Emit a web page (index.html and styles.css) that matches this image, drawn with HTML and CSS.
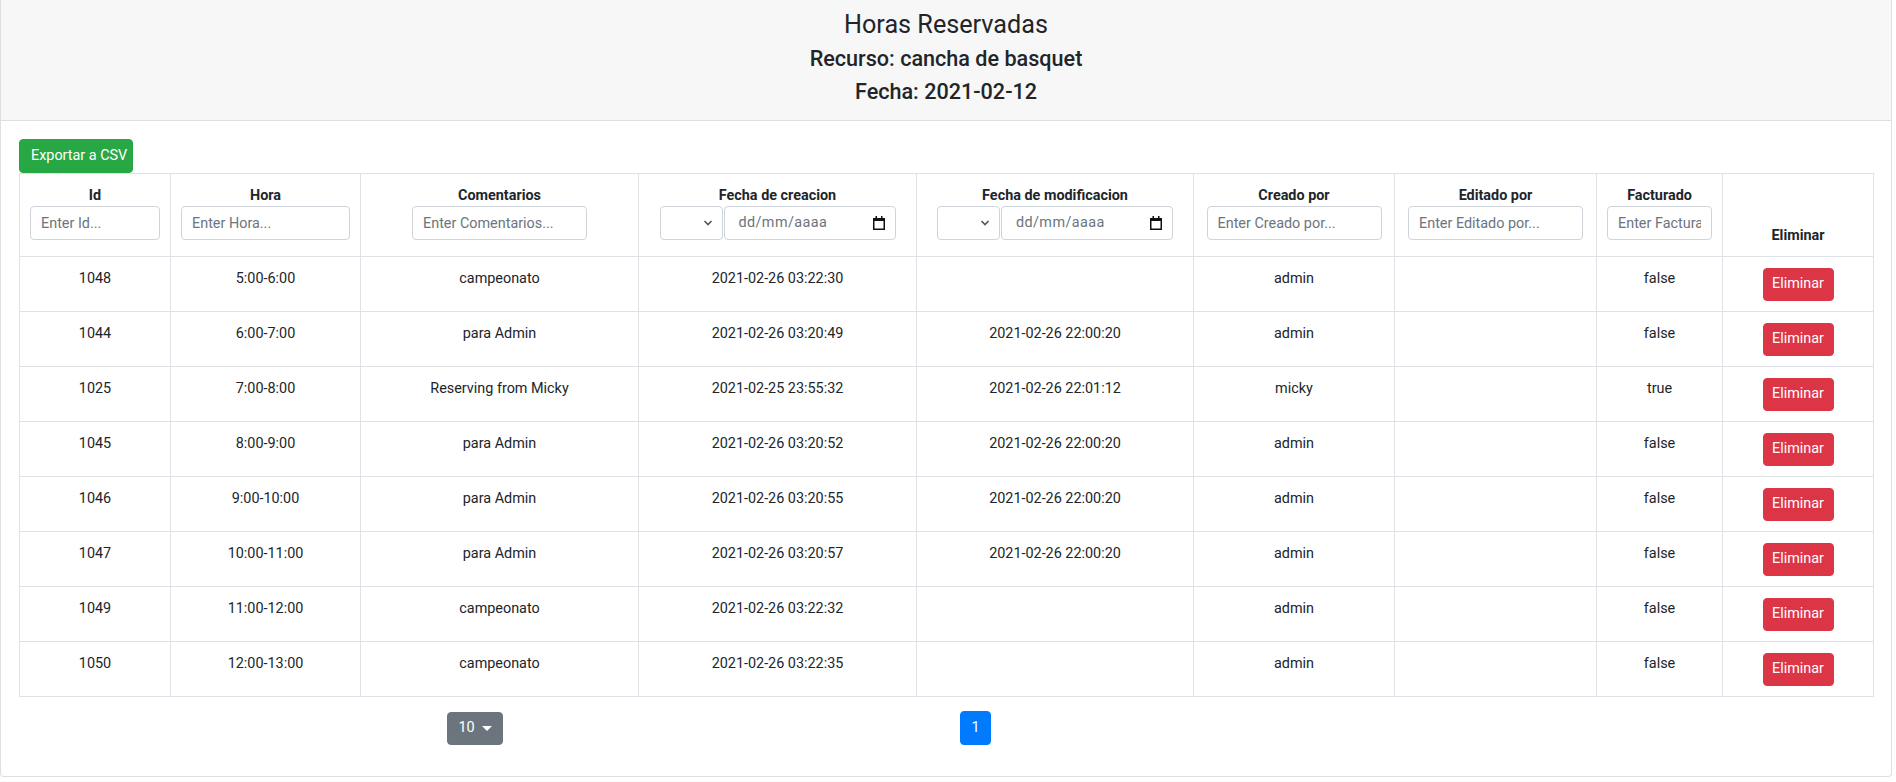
FILE: index.html
```html
<!DOCTYPE html>
<html lang="es">
<head>
<meta charset="utf-8">
<title>Horas Reservadas</title>
<link rel="stylesheet" href="styles.css">
</head>
<body>
<div class="card">
  <div class="card-header">
    <div class="title">Horas Reservadas</div>
    <div class="subtitle">Recurso: cancha de basquet</div>
    <div class="subtitle">Fecha: 2021-02-12</div>
  </div>
  <div class="card-body">
    <button class="btn btn-success">Exportar a CSV</button>
    <table class="grid">
      <colgroup>
        <col style="width:151px"><col style="width:190px"><col style="width:278px"><col style="width:278px"><col style="width:277px"><col style="width:201px"><col style="width:202px"><col style="width:126px"><col style="width:151px">
      </colgroup>
      <thead>
        <tr>
          <th><div class="label">Id</div><input class="filter" placeholder="Enter Id..."></th>
          <th><div class="label">Hora</div><input class="filter" placeholder="Enter Hora..."></th>
          <th><div class="label">Comentarios</div><input class="filter" placeholder="Enter Comentarios..."></th>
          <th><div class="label">Fecha de creacion</div>
            <div class="date-filter">
              <div class="cmp"><svg width="10" height="8" viewBox="0 0 10 8"><path d="M1.5 2 L5 5.5 L8.5 2" fill="none" stroke="#555" stroke-width="1.6"/></svg></div>
              <div class="date"><span>dd/mm/aaaa</span><svg width="12" height="14" viewBox="0 0 12 14"><rect x="0.75" y="2.75" width="10.5" height="10.5" fill="none" stroke="#111" stroke-width="1.5"/><rect x="0" y="2" width="12" height="3" fill="#111"/><rect x="2.5" y="0" width="1.5" height="3" fill="#111"/><rect x="8" y="0" width="1.5" height="3" fill="#111"/></svg></div>
            </div>
          </th>
          <th><div class="label">Fecha de modificacion</div>
            <div class="date-filter">
              <div class="cmp"><svg width="10" height="8" viewBox="0 0 10 8"><path d="M1.5 2 L5 5.5 L8.5 2" fill="none" stroke="#555" stroke-width="1.6"/></svg></div>
              <div class="date"><span>dd/mm/aaaa</span><svg width="12" height="14" viewBox="0 0 12 14"><rect x="0.75" y="2.75" width="10.5" height="10.5" fill="none" stroke="#111" stroke-width="1.5"/><rect x="0" y="2" width="12" height="3" fill="#111"/><rect x="2.5" y="0" width="1.5" height="3" fill="#111"/><rect x="8" y="0" width="1.5" height="3" fill="#111"/></svg></div>
            </div>
          </th>
          <th><div class="label">Creado por</div><input class="filter" placeholder="Enter Creado por..."></th>
          <th><div class="label">Editado por</div><input class="filter" placeholder="Enter Editado por..."></th>
          <th><div class="label">Facturado</div><input class="filter" placeholder="Enter Facturado..."></th>
          <th class="th-bottom"><div class="label">Eliminar</div></th>
        </tr>
      </thead>
      <tbody>
        <tr><td>1048</td><td>5:00-6:00</td><td>campeonato</td><td>2021-02-26 03:22:30</td><td></td><td>admin</td><td></td><td>false</td><td><button class="btn btn-danger">Eliminar</button></td></tr>
        <tr><td>1044</td><td>6:00-7:00</td><td>para Admin</td><td>2021-02-26 03:20:49</td><td>2021-02-26 22:00:20</td><td>admin</td><td></td><td>false</td><td><button class="btn btn-danger">Eliminar</button></td></tr>
        <tr><td>1025</td><td>7:00-8:00</td><td>Reserving from Micky</td><td>2021-02-25 23:55:32</td><td>2021-02-26 22:01:12</td><td>micky</td><td></td><td>true</td><td><button class="btn btn-danger">Eliminar</button></td></tr>
        <tr><td>1045</td><td>8:00-9:00</td><td>para Admin</td><td>2021-02-26 03:20:52</td><td>2021-02-26 22:00:20</td><td>admin</td><td></td><td>false</td><td><button class="btn btn-danger">Eliminar</button></td></tr>
        <tr><td>1046</td><td>9:00-10:00</td><td>para Admin</td><td>2021-02-26 03:20:55</td><td>2021-02-26 22:00:20</td><td>admin</td><td></td><td>false</td><td><button class="btn btn-danger">Eliminar</button></td></tr>
        <tr><td>1047</td><td>10:00-11:00</td><td>para Admin</td><td>2021-02-26 03:20:57</td><td>2021-02-26 22:00:20</td><td>admin</td><td></td><td>false</td><td><button class="btn btn-danger">Eliminar</button></td></tr>
        <tr><td>1049</td><td>11:00-12:00</td><td>campeonato</td><td>2021-02-26 03:22:32</td><td></td><td>admin</td><td></td><td>false</td><td><button class="btn btn-danger">Eliminar</button></td></tr>
        <tr><td>1050</td><td>12:00-13:00</td><td>campeonato</td><td>2021-02-26 03:22:35</td><td></td><td>admin</td><td></td><td>false</td><td><button class="btn btn-danger">Eliminar</button></td></tr>
      </tbody>
    </table>
    <div class="pager">
      <button class="btn btn-secondary size-btn">10 <span class="caret"></span></button>
      <button class="btn btn-primary page-btn">1</button>
    </div>
  </div>
</div>
</body>
</html>
```
FILE: styles.css
```css
* { box-sizing: border-box; }
html, body { margin: 0; padding: 0; background: #fff; }
body {
  font-family: Roboto, "Noto Sans", sans-serif;
  font-size: 14.4px;
  color: #212529;
  line-height: 1.5;
}
.card {
  margin: 0 4px 4px 0;
  border: 1px solid #dfdfdf;
  border-top: 0;
  border-radius: 0 0 4px 4px;
}
.card-header {
  background: #f7f7f7;
  border-bottom: 1px solid #dfdfdf;
  padding: 8px 0 12px;
  text-align: center;
}
.title { font-size: 25.2px; line-height: 34px; font-weight: 400; }
.subtitle { font-size: 21.6px; line-height: 33px; font-weight: 500; }
.card-body { padding: 18px 18px 18px; }
.btn {
  font-family: inherit;
  font-size: 14.4px;
  border: 1px solid transparent;
  border-radius: 4px;
  color: #fff;
  cursor: pointer;
  padding: 0 11px;
  line-height: 1;
  white-space: nowrap;
}
.btn-success { background: #28a745; border-color: #28a745; height: 34px; width: 114px; display: block; }
.btn-danger { background: #dc3545; border-color: #dc3545; height: 33px; width: 71px; padding: 0; }
.btn-secondary { background: #6c757d; border-color: #6c757d; }
.btn-primary { background: #007bff; border-color: #007bff; }
.grid {
  width: 100%;
  table-layout: fixed;
  border-collapse: collapse;
}
.grid th, .grid td {
  border: 1px solid #dee2e6;
  text-align: center;
  vertical-align: top;
}
.grid th { padding: 11px 10px 16px; font-weight: 700; }
.grid th .label { line-height: 21px; }
.grid th.th-bottom { vertical-align: bottom; padding-bottom: 10px; }
.grid td { padding: 11px 10px 10px; line-height: 21.6px; height: 55px; }
.filter {
  display: block;
  margin: 0 auto;
  width: 175px;
  max-width: 100%;
  height: 34px;
  border: 1px solid #ced4da;
  border-radius: 4px;
  padding: 0 10px;
  font-family: inherit;
  font-size: 14.4px;
  color: #495057;
}
.filter::placeholder { color: #6c757d; }
.date-filter {
  display: flex;
  justify-content: center;
  gap: 1px;
}
.cmp, .date {
  height: 34px;
  border: 1px solid #ced4da;
  border-radius: 4px;
  display: flex;
  align-items: center;
  font-weight: 400;
}
.cmp { width: 63px; justify-content: flex-end; padding-right: 9px; }
.date { width: 172px; justify-content: space-between; padding: 0 10px 0 14px; color: #6c757d; }
.date span { letter-spacing: 0.4px; }
.pager {
  display: flex;
  align-items: center;
  padding: 14px 0 13px 428px;
}
.size-btn { height: 33px; width: 56px; padding: 0; display: flex; align-items: center; justify-content: center; gap: 7px; }
.caret {
  width: 0; height: 0;
  border-left: 5px solid transparent;
  border-right: 5px solid transparent;
  border-top: 5px solid #fff;
}
.page-btn { height: 34px; width: 31px; padding: 0; margin-left: 457px; }
```
